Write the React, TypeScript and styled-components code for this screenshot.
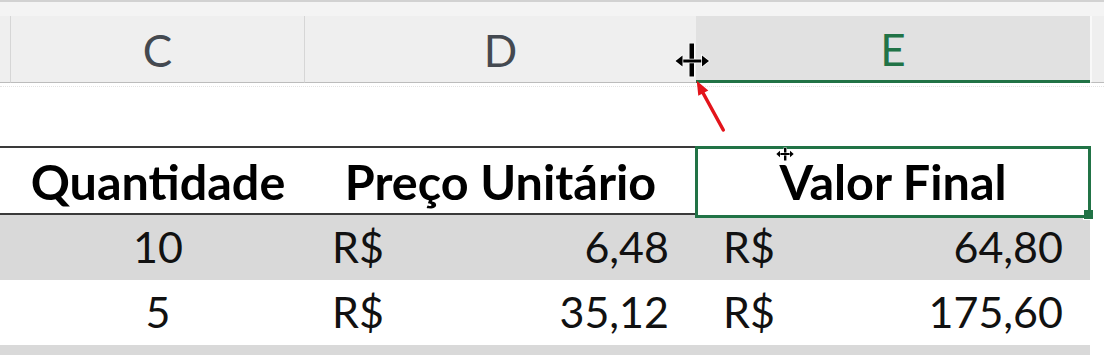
import React from "react";
import styled, {createGlobalStyle, css} from "styled-components";

const GlobalStyle = createGlobalStyle`
  html, body {
    margin: 0;
    padding: 0;
    background: #ffffff;
  }
  body {
    font-family: Lato, "Open Sans", sans-serif;
  }
`;

const COLS = "11px 294px 391px 394px 1fr";
const GREEN = "#217346";
const DARK = "#3a3a3a";

const Sheet = styled.div`
  position: relative;
  width: 1104px;
  height: 355px;
  overflow: hidden;
  background: #fff;
`;

const TopStrip = styled.div`
  height: 14px;
  border-top: 2px solid #d2d2d2;
  background: #f4f4f4;
`;

const ColumnHeaders = styled.div`
  display: grid;
  grid-template-columns: ${COLS};
  height: 67px;
`;

const ColumnHeader = styled.div<{ $selected?: boolean; $sep?: boolean }>`
  box-sizing: border-box;
  display: flex;
  align-items: center;
  justify-content: center;
  padding-top: 2px;
  background: ${p => (p.$selected ? "#e1e1e1" : "#efefef")};
  border-bottom: ${p => (p.$selected ? `3px solid ${GREEN}` : "1px solid #bcbcbc")};
  border-right: ${p => (p.$sep ? "1px solid #d6d6d6" : "none")};
  color: ${p => (p.$selected ? GREEN : "#444950")};
  font-size: 44px;
  line-height: 1;
`;

const HeaderRest = styled(ColumnHeader)`
  border-left: 2px solid #f9f9f9;
`;

const BlankRow = styled.div`
  height: 59px;
  margin-top: 3px;
  border-top: 1px dotted #e4e4e4;
`;

const TableRow = styled.div<{ $head?: boolean }>`
  display: grid;
  grid-template-columns: ${COLS};
  height: ${p => (p.$head ? "69px" : "65px")};
  color: #111;
`;

const Cell = styled.div<{ $shaded?: boolean; $head?: boolean; $outside?: boolean }>`
  box-sizing: border-box;
  display: flex;
  align-items: flex-end;
  justify-content: center;
  line-height: 1;
  white-space: nowrap;
  background: ${p => (p.$shaded && !p.$outside ? "#d9d9d9" : "#fff")};
  ${p =>
    p.$head
      ? css`
          font-weight: 700;
          font-size: 48.5px;
          color: #000;
          padding-bottom: 8px;
          border-top: 2px solid ${p.$outside ? "transparent" : DARK};
          border-bottom: 2px solid ${p.$outside ? "transparent" : DARK};
        `
      : css`
          font-size: 43px;
          padding-bottom: 12px;
        `}
`;

const MoneyCell = styled(Cell)`
  justify-content: space-between;
  padding-left: 27px;
  padding-right: 27px;
`;

const SelectedHeadCell = styled(Cell)`
  position: relative;
  border-top-color: transparent;
  border-bottom-color: transparent;

  &::after {
    content: "";
    position: absolute;
    top: -2px;
    left: -1px;
    right: -1px;
    bottom: -5px;
    border: 3px solid ${GREEN};
    pointer-events: none;
  }
`;

const FillHandle = styled.span`
  position: absolute;
  right: -4px;
  bottom: -7px;
  width: 9px;
  height: 9px;
  background: ${GREEN};
  border: 1px solid #fff;
`;

const Overlay = styled.svg<{ $x: number; $y: number }>`
  position: absolute;
  left: ${p => p.$x}px;
  top: ${p => p.$y}px;
  overflow: visible;
  pointer-events: none;
`;

type Row = { qty: string; price: string; total: string };

const rows: Row[] = [
  {qty: "10", price: "6,48", total: "64,80"},
  {qty: "5", price: "35,12", total: "175,60"},
];

function ResizeCursor() {
  return (
    <Overlay $x={673} $y={41} width={38} height={38} viewBox="0 0 38 38">
      <g stroke="#fff" strokeWidth={1.5} paintOrder="stroke" fill="#000">
        <rect x={16.5} y={2.5} width={4.5} height={33}/>
        <rect x={7} y={18.5} width={24} height={3}/>
        <polygon points="2.5,20 9.5,14.5 9.5,25.5"/>
        <polygon points="36,20 29,14.5 29,25.5"/>
      </g>
    </Overlay>
  );
}

function MoveCursor() {
  return (
    <Overlay $x={776} $y={147} width={18} height={14} viewBox="0 0 18 14">
      <g fill="#000" stroke="#fff" strokeWidth={0.8} paintOrder="stroke">
        <rect x={8} y={1} width={2.4} height={12.5}/>
        <rect x={3} y={6} width={12} height={2}/>
        <polygon points="0.3,7 4,3.8 4,10.2"/>
        <polygon points="17.7,7 14,3.8 14,10.2"/>
      </g>
    </Overlay>
  );
}

function RedArrow() {
  return (
    <Overlay $x={690} $y={76} width={40} height={60} viewBox="0 0 40 60">
      <line x1={33.3} y1={54} x2={12.5} y2={16} stroke="#e3141b" strokeWidth={3.5} strokeLinecap="round"/>
      <polygon points="6.7,4.7 8.3,19.8 18.3,14.4" fill="#e3141b"/>
    </Overlay>
  );
}

export default function App(): JSX.Element {
  return <Sheet>
    <GlobalStyle/>
    <TopStrip/>
    <ColumnHeaders>
      <ColumnHeader $sep/>
      <ColumnHeader $sep>C</ColumnHeader>
      <ColumnHeader>D</ColumnHeader>
      <ColumnHeader $selected>E</ColumnHeader>
      <HeaderRest/>
    </ColumnHeaders>
    <BlankRow/>
    <TableRow $head>
      <Cell $head/>
      <Cell $head>Quantidade</Cell>
      <Cell $head>Preço Unitário</Cell>
      <SelectedHeadCell $head>
        Valor Final
        <FillHandle/>
      </SelectedHeadCell>
      <Cell $head $outside/>
    </TableRow>
    {[...rows, {qty: "", price: "", total: ""}].map((row, i) => (
      <TableRow key={i}>
        <Cell $shaded={i % 2 === 0}/>
        <Cell $shaded={i % 2 === 0}>{row.qty}</Cell>
        <MoneyCell $shaded={i % 2 === 0}>
          {row.price && <><span>R$</span><span>{row.price}</span></>}
        </MoneyCell>
        <MoneyCell $shaded={i % 2 === 0}>
          {row.total && <><span>R$</span><span>{row.total}</span></>}
        </MoneyCell>
        <Cell $outside/>
      </TableRow>
    ))}
    <ResizeCursor/>
    <RedArrow/>
    <MoveCursor/>
  </Sheet>
}
